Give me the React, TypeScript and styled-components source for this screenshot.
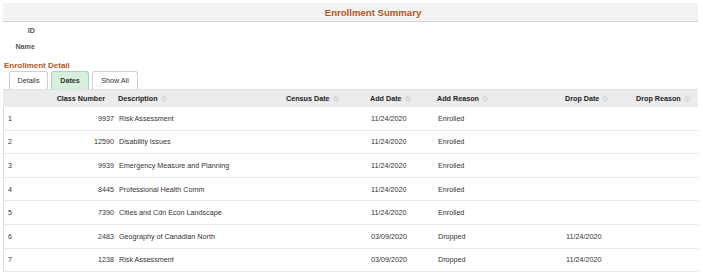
import React from "react";
import styled, { createGlobalStyle } from "styled-components";

const Global = createGlobalStyle`
  html, body { margin: 0; padding: 0; background: #fff; }
  body { font-family: "Liberation Sans", Arial, sans-serif; }
`;

const Page = styled.div`
  width: 695px;
  padding: 3px 0 0 3px;
  font-family: "Liberation Sans", Arial, sans-serif;
`;

const TitleBar = styled.div`
  height: 18px;
  background: #f3f3f3;
  border-bottom: 1px solid #d6d6d6;
  display: flex;
  align-items: center;
  justify-content: center;
  padding-left: 45px;
  color: #b5561d;
  font-weight: bold;
  font-size: 9.6px;
`;

const InfoGrid = styled.div`
  display: grid;
  grid-template-columns: 32px 1fr;
  grid-auto-rows: 16px;
  padding-top: 1px;
`;

const Label = styled.div`
  text-align: right;
  font-weight: bold;
  font-size: 7.2px;
  color: #555;
  line-height: 16px;
`;

const Value = styled.div`
  font-size: 7.2px;
`;

const SectionTitle = styled.div`
  margin-top: 5px;
  height: 11px;
  line-height: 11px;
  padding-left: 1px;
  color: #b5561d;
  font-weight: bold;
  font-size: 8px;
`;

const Tabs = styled.div`
  display: flex;
  gap: 3px;
  padding-left: 6px;
`;

const Tab = styled.div<{ $active?: boolean; $w: number }>`
  width: ${(p) => p.$w}px;
  height: 18px;
  box-sizing: border-box;
  display: flex;
  align-items: center;
  justify-content: center;
  border: 1px solid ${(p) => (p.$active ? "#a9d6b5" : "#cfcfcf")};
  border-bottom: none;
  border-radius: 3px 3px 0 0;
  background: ${(p) => (p.$active ? "#d6f0dd" : "#fff")};
  font-size: 7.2px;
  font-weight: ${(p) => (p.$active ? "bold" : "normal")};
  color: #333;
`;

const COLS = "53px 59px 168px 84px 67px 128px 71px 65px";

const HeaderRow = styled.div`
  display: grid;
  grid-template-columns: ${COLS};
  height: 18px;
  background: #ececec;
  border-top: 1px solid #e0e0e0;
  box-sizing: border-box;
  align-items: center;
`;

const HeadCell = styled.div<{ $right?: boolean }>`
  display: flex;
  align-items: center;
  justify-content: ${(p) => (p.$right ? "flex-end" : "flex-start")};
  gap: 3px;
  padding-left: 3px;
  padding-right: ${(p) => (p.$right ? "7px" : "0")};
  font-size: 7.2px;
  font-weight: bold;
  color: #222;
  white-space: nowrap;
`;

const Row = styled.div`
  display: grid;
  grid-template-columns: ${COLS};
  height: 23.6px;
  box-sizing: border-box;
  align-items: center;
  border-left: 1px solid #dcdcdc;
  border-bottom: 1.5px solid #e8e8e8;
`;

const Cell = styled.div<{ $right?: boolean; $first?: boolean }>`
  padding-left: ${(p) => (p.$first ? "4px" : "3px")};
  padding-right: ${(p) => (p.$right ? "2px" : "0")};
  text-align: ${(p) => (p.$right ? "right" : "left")};
  font-size: 7.2px;
  color: #333;
  white-space: nowrap;
`;

const SortIcon = () => (
  <svg width="6" height="6" viewBox="0 0 12 12" fill="none">
    <circle cx="6" cy="6" r="5.2" stroke="#c4c4c4" strokeWidth="1" />
    <path d="M3.8 5 L6 2.9 L8.2 5" stroke="#b0b0b0" strokeWidth="1.1" />
    <path d="M3.8 7 L6 9.1 L8.2 7" stroke="#b0b0b0" strokeWidth="1.1" />
  </svg>
);

const rows = [
  ["1", "9937", "Risk Assessment", "", "11/24/2020", "Enrolled", "", ""],
  ["2", "12590", "Disability Issues", "", "11/24/2020", "Enrolled", "", ""],
  ["3", "9939", "Emergency Measure and Planning", "", "11/24/2020", "Enrolled", "", ""],
  ["4", "8445", "Professional Health Comm", "", "11/24/2020", "Enrolled", "", ""],
  ["5", "7390", "Cities and Cdn Econ Landscape", "", "11/24/2020", "Enrolled", "", ""],
  ["6", "2483", "Geography of Canadian North", "", "03/09/2020", "Dropped", "11/24/2020", ""],
  ["7", "1238", "Risk Assessment", "", "03/09/2020", "Dropped", "11/24/2020", ""],
];

const headers = ["", "Class Number", "Description", "Census Date", "Add Date", "Add Reason", "Drop Date", "Drop Reason"];

export default function App() {
  return (
    <>
      <Global />
      <Page>
        <TitleBar>Enrollment Summary</TitleBar>
        <InfoGrid>
          <Label>ID</Label>
          <Value />
          <Label>Name</Label>
          <Value />
        </InfoGrid>
        <SectionTitle>Enrollment Detail</SectionTitle>
        <Tabs>
          <Tab $w={39}>Details</Tab>
          <Tab $w={38} $active>Dates</Tab>
          <Tab $w={46}>Show All</Tab>
        </Tabs>
        <HeaderRow>
          {headers.map((h, i) => (
            <HeadCell key={i} $right={i === 1}>
              {h && (
                <>
                  <span>{h}</span>
                  <SortIcon />
                </>
              )}
            </HeadCell>
          ))}
        </HeaderRow>
        {rows.map((r) => (
          <Row key={r[0]}>
            {r.map((c, i) => (
              <Cell key={i} $right={i === 1} $first={i === 0}>
                {c}
              </Cell>
            ))}
          </Row>
        ))}
      </Page>
    </>
  );
}
